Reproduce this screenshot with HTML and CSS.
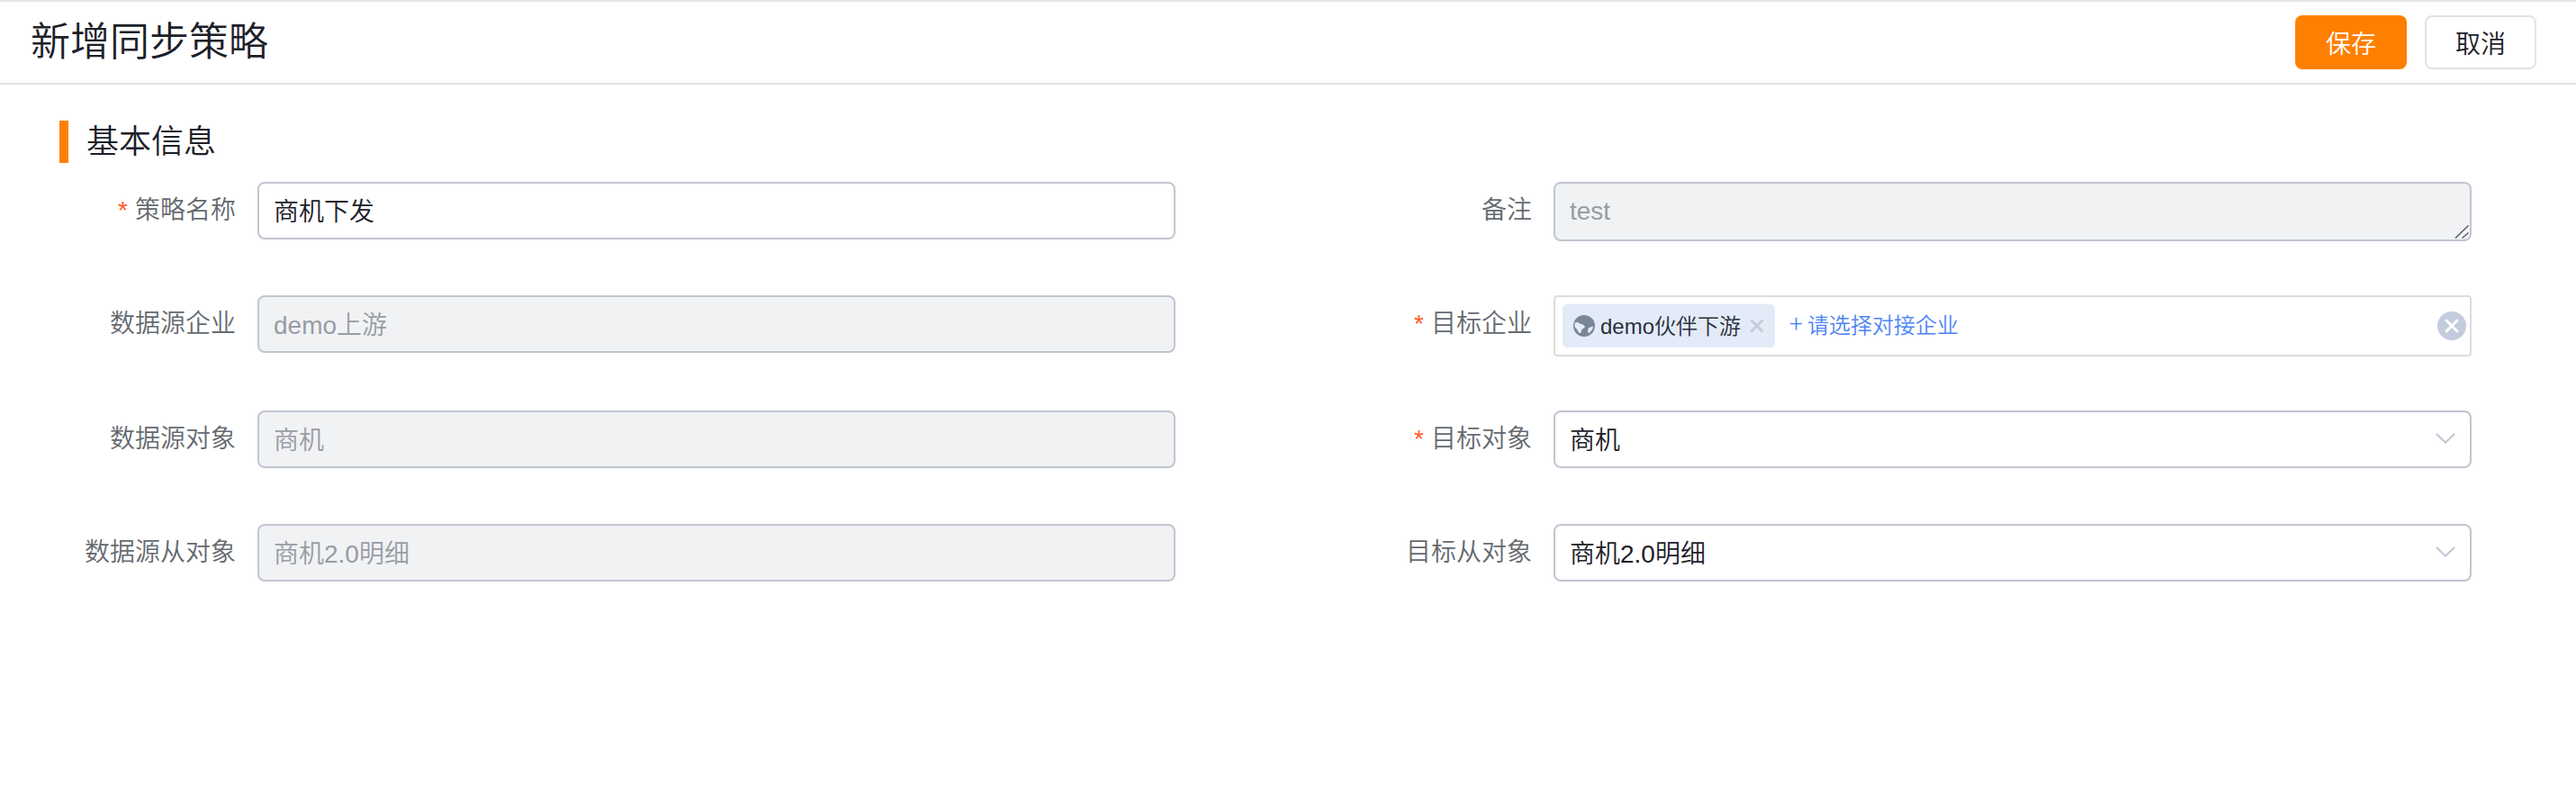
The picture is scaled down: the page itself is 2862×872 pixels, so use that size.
FILE: index.html
```html
<!DOCTYPE html>
<html lang="zh-CN">
<head>
<meta charset="utf-8">
<title>新增同步策略</title>
<link rel="stylesheet" href="styles.css">
</head>
<body>
<header class="topbar">
  <h1 class="page-title">新增同步策略</h1>
  <div class="actions">
    <button class="btn btn-primary" type="button">保存</button>
    <button class="btn btn-default" type="button">取消</button>
  </div>
</header>
<main class="content">
  <h2 class="section-title">基本信息</h2>
  <form class="form-grid">
    <div class="field">
      <label class="field-label"><span class="req">*</span>策略名称</label>
      <input class="control" type="text" value="商机下发">
    </div>
    <div class="field">
      <label class="field-label">备注</label>
      <div class="area-wrap">
        <textarea class="control control-area" readonly>test</textarea>
        <svg class="grip" viewBox="0 0 16 15"><path d="M15.500 0.500L1 14.500M15.500 8.500L8.500 14.500" stroke="#5c5f66" stroke-width="1.500" fill="none"/></svg>
      </div>
    </div>
    <div class="field">
      <label class="field-label">数据源企业</label>
      <input class="control" type="text" value="demo上游" disabled>
    </div>
    <div class="field">
      <label class="field-label"><span class="req">*</span>目标企业</label>
      <div class="tagbox">
        <span class="tag">
          <svg class="globe" viewBox="0 0 24 24"><circle cx="12" cy="12" r="12" fill="#7a8799"/><path fill="#e3eaf8" d="M1.500 9C4 7 6 8 8 10c2-.5 4 1 5 3-1 2-3.500 2-4 4 0 2-1 3.500-2.500 3C5 18 4 15 1.500 13zM16 16c1-2 3-3 6-3.500 0 2.500-2 5.500-5 8-.5-1.500-1-3-1-4.500z"/></svg>
          <span class="tag-text">demo伙伴下游</span>
          <svg class="tag-x" viewBox="0 0 16 16"><path d="M1.500 1.500l13 13M14.500 1.500l-13 13" stroke="#c6cdd7" stroke-width="3" fill="none"/></svg>
        </span>
        <span class="add-link"><span class="add-plus">+</span>请选择对接企业</span>
        <svg class="clear" viewBox="0 0 32 32"><circle cx="16" cy="16" r="16" fill="#c3ccdc"/><path d="M10 10l12 12M22 10L10 22" stroke="#fff" stroke-width="3" stroke-linecap="round" fill="none"/></svg>
      </div>
    </div>
    <div class="field">
      <label class="field-label">数据源对象</label>
      <input class="control" type="text" value="商机" disabled>
    </div>
    <div class="field">
      <label class="field-label"><span class="req">*</span>目标对象</label>
      <div class="control select"><span>商机</span>
        <svg class="chevron" viewBox="0 0 22 12"><path d="M1 1l10 9.500L21 1" stroke="#c0c6d4" stroke-width="2" fill="none"/></svg>
      </div>
    </div>
    <div class="field">
      <label class="field-label">数据源从对象</label>
      <input class="control" type="text" value="商机2.0明细" disabled>
    </div>
    <div class="field">
      <label class="field-label">目标从对象</label>
      <div class="control select"><span>商机2.0明细</span>
        <svg class="chevron" viewBox="0 0 22 12"><path d="M1 1l10 9.500L21 1" stroke="#c0c6d4" stroke-width="2" fill="none"/></svg>
      </div>
    </div>
  </form>
</main>
</body>
</html>
```

FILE: styles.css
```css
* { box-sizing: border-box; }
html, body { margin: 0; padding: 0; background: #fff; }
body {
  font-family: "Liberation Sans", "Noto Sans CJK SC", sans-serif;
  font-weight: 350;
  color: #1c2028;
  font-size: 28px;
}
.topbar {
  height: 94px;
  border-top: 2px solid #e4e4e4;
  border-bottom: 2px solid #dfe2e7;
  display: flex;
  align-items: center;
  justify-content: space-between;
  padding: 0 44px 0 34px;
}
.page-title {
  margin: 0;
  font-size: 44px;
  font-weight: 350;
  line-height: 60px;
}
.actions { display: flex; gap: 20px; }
.btn {
  width: 124px;
  height: 60px;
  border-radius: 8px;
  font: inherit;
  font-size: 28px;
  padding: 0;
}
.btn-primary { background: #ff8000; border: 0; color: #fff; }
.btn-default { background: #fff; border: 2px solid #dfe3ea; color: #1c2028; }
.content { padding: 40px 0 0 66px; }
.section-title {
  margin: 0 0 21px;
  height: 47px;
  border-left: 10px solid #ff8000;
  padding-left: 20px;
  font-size: 36px;
  font-weight: 350;
  line-height: 47px;
  color: #1c2028;
}
.form-grid {
  display: grid;
  grid-template-columns: 1240px 1240px;
  column-gap: 200px;
  row-gap: 60px;
  align-items: start;
}
.field { display: flex; align-items: flex-start; min-height: 66px; }
.field-label {
  width: 196px;
  margin-right: 24px;
  text-align: right;
  white-space: nowrap;
  color: #65696f;
  line-height: 64px;
}
.req { color: #ff5a2b; margin-right: 8px; }
.control {
  width: 1020px;
  height: 64px;
  border: 2px solid #c1c5d1;
  border-radius: 8px;
  padding: 0 16px 2px;
  font: inherit;
  color: #1c2028;
  background: #fff;
  outline: none;
}
.control:disabled { background: #f1f2f4; color: #979ca4; -webkit-text-fill-color: #979ca4; opacity: 1; }
.area-wrap { position: relative; width: 1020px; height: 66px; }
.control-area {
  height: 66px;
  padding: 13px 16px;
  line-height: 36px;
  resize: none;
  display: block;
  overflow: hidden;
  background: #f1f2f4;
  color: #979ca4;
}
.grip { position: absolute; right: 3px; bottom: 3px; width: 16px; height: 15px; }
.select { display: flex; align-items: center; justify-content: space-between; padding-right: 16px; }
.chevron { width: 22px; height: 12px; }
.tagbox {
  width: 1020px;
  height: 68px;
  border: 2px solid #dcdcdc;
  border-radius: 4px;
  display: flex;
  align-items: center;
  padding: 0 4px 0 8px;
}
.tag {
  height: 48px;
  width: 236px;
  flex: none;
  background: #e3eaf8;
  border-radius: 5px;
  display: flex;
  align-items: center;
  padding-left: 12px;
  font-size: 24px;
}
.globe { width: 24px; height: 24px; margin-right: 6px; flex: none; }
.tag-text { color: #2a2f3a; white-space: nowrap; margin-bottom: 3px; }
.tag-x { width: 16px; height: 16px; margin-left: 10px; flex: none; }
.add-link { margin-left: 16px; margin-bottom: 2px; font-size: 24px; color: #4d85f6; white-space: nowrap; flex: 1; line-height: 32px; }
.add-plus { color: #3f7cf5; font-family: "Noto Sans CJK SC", sans-serif; font-size: 28px; line-height: 28px; margin-right: 5px; font-weight: 300; }
.clear { width: 32px; height: 32px; flex: none; }
```
